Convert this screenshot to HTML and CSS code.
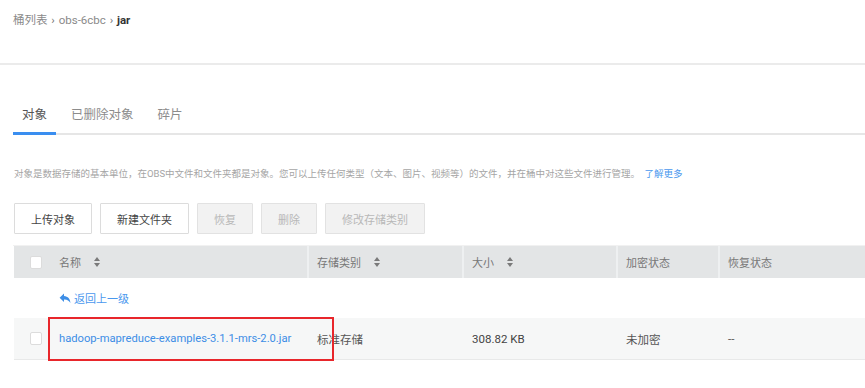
FILE: index.html
```html
<!DOCTYPE html>
<html lang="zh-CN">
<head>
    <meta charset="UTF-8">
    <meta name="viewport" content="width=device-width, initial-scale=1.0">
    <title>jar</title>
    <link rel="stylesheet" href="styles.css">
</head>
<body>
    <div class="crumb">
        <span class="crumb-link">桶列表</span>
        <span class="crumb-sep">›</span>
        <span class="crumb-link">obs-6cbc</span>
        <span class="crumb-sep">›</span>
        <span class="crumb-cur">jar</span>
    </div>

    <div class="main">
        <ul class="tabs">
            <li class="tab active">对象</li>
            <li class="tab">已删除对象</li>
            <li class="tab">碎片</li>
        </ul>

        <p class="desc">对象是数据存储的基本单位，在OBS中文件和文件夹都是对象。您可以上传任何类型（文本、图片、视频等）的文件，并在桶中对这些文件进行管理。 <a class="more">了解更多</a></p>

        <div class="toolbar">
            <button class="btn">上传对象</button>
            <button class="btn">新建文件夹</button>
            <button class="btn" disabled>恢复</button>
            <button class="btn" disabled>删除</button>
            <button class="btn" disabled>修改存储类别</button>
        </div>

        <div class="table">
            <div class="row head">
                <div class="cell check"><span class="box"></span></div>
                <div class="cell">名称 <svg class="sort" width="6" height="10" viewBox="0 0 6 10"><path d="M3 0 L6 4 L0 4 Z M0 6 L6 6 L3 10 Z" fill="#7a7a7a"/></svg></div>
                <div class="cell sep">存储类别 <svg class="sort" width="6" height="10" viewBox="0 0 6 10"><path d="M3 0 L6 4 L0 4 Z M0 6 L6 6 L3 10 Z" fill="#7a7a7a"/></svg></div>
                <div class="cell sep">大小 <svg class="sort" width="6" height="10" viewBox="0 0 6 10"><path d="M3 0 L6 4 L0 4 Z M0 6 L6 6 L3 10 Z" fill="#7a7a7a"/></svg></div>
                <div class="cell sep">加密状态</div>
                <div class="cell sep">恢复状态</div>
            </div>
            <div class="row back">
                <div class="cell check"></div>
                <div class="cell">
                    <a class="back-link">
                        <svg width="12" height="11" viewBox="0 0 12 11"><path d="M5 0.5 L0.6 4.8 L5 9 L5 6.4 C8 6.2 10 7.3 11.4 10 C11.2 6 9 3.4 5 3.1 Z" fill="#3d8ee6"/></svg>返回上一级
                    </a>
                </div>
            </div>
            <div class="row file">
                <div class="cell check"><span class="box"></span></div>
                <div class="cell"><a class="name">hadoop-mapreduce-examples-3.1.1-mrs-2.0.jar</a></div>
                <div class="cell">标准存储</div>
                <div class="cell num">308.82 KB</div>
                <div class="cell">未加密</div>
                <div class="cell">--</div>
            </div>
            <div class="mark"></div>
        </div>
    </div>
</body>
</html>
```

FILE: styles.css
```css
*{
    margin: 0;
    padding: 0;
    box-sizing: border-box;
}
body{
    background-color: #fff;
    font-family: "Roboto", "Noto Sans CJK SC", sans-serif;
    color: #555;
}
.crumb{
    height: 65px;
    padding: 13px 0 0 13px;
    border-bottom: 2px solid #ebebeb;
    font-size: 11.5px;
    line-height: 14px;
}
.crumb-link{
    color: #8a8a8a;
}
.crumb-sep{
    color: #777;
    margin: 0 1px;
}
.crumb-cur{
    color: #333;
    font-weight: bold;
}
.main{
    padding-left: 13px;
    padding-bottom: 20px;
}
.tabs{
    list-style: none;
    display: flex;
    margin-top: 33px;
    border-bottom: 2px solid #e6e6e6;
}
.tab{
    font-size: 12.5px;
    line-height: 17px;
    padding: 8px 9px 9px;
    margin-right: 6px;
    margin-bottom: -2px;
    color: #8c8c8c;
    border-bottom: 3px solid transparent;
}
.tab.active{
    color: #555;
    border-bottom-color: #3a8ef0;
}
.desc{
    margin-top: 32px;
    padding-left: 1px;
    font-size: 9.5px;
    line-height: 14px;
    color: #a5a5a5;
}
.more{
    color: #4a98ee;
    margin-left: 2px;
}
.toolbar{
    display: flex;
    gap: 8px;
    margin-top: 22px;
    padding-left: 1px;
}
.btn{
    height: 31px;
    padding: 0 16px;
    font-family: inherit;
    font-size: 11px;
    color: #444;
    background: #fff;
    border: 1px solid #dcdcdc;
    border-radius: 1px;
}
.btn:disabled{
    color: #b8b8b8;
    background: #f2f2f2;
    border-color: #e2e2e2;
}
.table{
    position: relative;
    margin-top: 11px;
    padding-left: 1px;
    border-top: 1px solid #f1f1f1;
}
.row{
    display: grid;
    grid-template-columns: 35px 258px 155px 154px 102px 1fr;
    align-items: center;
}
.cell{
    padding-left: 10px;
    font-size: 11px;
    display: flex;
    align-items: center;
    height: 100%;
}
.head{
    height: 32px;
    background: #e3e5e6;
    color: #777;
}
.head .sep{
    border-left: 2px solid #eef0f1;
    padding-left: 8px;
}
.check{
    padding-left: 16px;
}
.box{
    width: 12px;
    height: 13px;
    background: #fff;
    border: 1px solid #dcdcdc;
    border-radius: 2px;
}
.sort{
    margin-left: 13px;
}
.back{
    height: 40px;
}
.back-link{
    display: flex;
    align-items: center;
    gap: 3px;
    color: #4a98ee;
    font-size: 11px;
}
.file{
    height: 42px;
    background: #f6f7f7;
    border-bottom: 1px solid #e8e9e9;
    color: #555;
}
.file .cell{
    font-size: 11.5px;
}
.file .name{
    color: #3d8ee6;
    font-size: 11.2px;
}
.num{
    color: #444;
}
.mark{
    position: absolute;
    z-index: 1;
    left: 35px;
    top: 71px;
    bottom: -1px;
    width: 286px;
    border: 2px solid #e8262b;
}
```
